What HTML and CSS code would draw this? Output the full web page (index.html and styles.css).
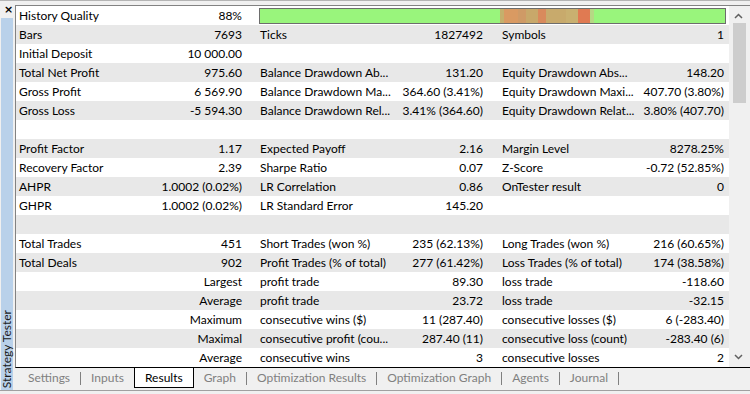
FILE: index.html
```html
<!DOCTYPE html>
<html lang="en">
<head>
    <meta charset="UTF-8">
    <title>Strategy Tester</title>
    <link rel="stylesheet" href="styles.css">
</head>
<body>
    <div class="window">
        <div class="sidebar">
            <div class="close">&times;</div>
            <div class="caption"><span>Strategy Tester</span></div>
        </div>

        <div class="main">
            <div class="panel">
                <div class="report">
                    <div class="row">
                        <div class="cell"><span class="label">History Quality</span><span class="value">88%</span></div>
                        <div class="cell quality-cell"><div class="quality"></div></div>
                    </div>
                    <div class="row">
                        <div class="cell"><span class="label">Bars</span><span class="value">7693</span></div>
                        <div class="cell"><span class="label">Ticks</span><span class="value">1827492</span></div>
                        <div class="cell"><span class="label">Symbols</span><span class="value">1</span></div>
                    </div>
                    <div class="row">
                        <div class="cell"><span class="label">Initial Deposit</span><span class="value">10 000.00</span></div>
                        <div class="cell"></div>
                        <div class="cell"></div>
                    </div>
                    <div class="row">
                        <div class="cell"><span class="label">Total Net Profit</span><span class="value">975.60</span></div>
                        <div class="cell"><span class="label">Balance Drawdown Ab...</span><span class="value">131.20</span></div>
                        <div class="cell"><span class="label">Equity Drawdown Abs...</span><span class="value">148.20</span></div>
                    </div>
                    <div class="row">
                        <div class="cell"><span class="label">Gross Profit</span><span class="value">6 569.90</span></div>
                        <div class="cell"><span class="label">Balance Drawdown Ma...</span><span class="value">364.60 (3.41%)</span></div>
                        <div class="cell"><span class="label">Equity Drawdown Maxi...</span><span class="value">407.70 (3.80%)</span></div>
                    </div>
                    <div class="row">
                        <div class="cell"><span class="label">Gross Loss</span><span class="value">-5 594.30</span></div>
                        <div class="cell"><span class="label">Balance Drawdown Rel...</span><span class="value">3.41% (364.60)</span></div>
                        <div class="cell"><span class="label">Equity Drawdown Relat...</span><span class="value">3.80% (407.70)</span></div>
                    </div>
                    <div class="row"></div>
                    <div class="row">
                        <div class="cell"><span class="label">Profit Factor</span><span class="value">1.17</span></div>
                        <div class="cell"><span class="label">Expected Payoff</span><span class="value">2.16</span></div>
                        <div class="cell"><span class="label">Margin Level</span><span class="value">8278.25%</span></div>
                    </div>
                    <div class="row">
                        <div class="cell"><span class="label">Recovery Factor</span><span class="value">2.39</span></div>
                        <div class="cell"><span class="label">Sharpe Ratio</span><span class="value">0.07</span></div>
                        <div class="cell"><span class="label">Z-Score</span><span class="value">-0.72 (52.85%)</span></div>
                    </div>
                    <div class="row">
                        <div class="cell"><span class="label">AHPR</span><span class="value">1.0002 (0.02%)</span></div>
                        <div class="cell"><span class="label">LR Correlation</span><span class="value">0.86</span></div>
                        <div class="cell"><span class="label">OnTester result</span><span class="value">0</span></div>
                    </div>
                    <div class="row">
                        <div class="cell"><span class="label">GHPR</span><span class="value">1.0002 (0.02%)</span></div>
                        <div class="cell"><span class="label">LR Standard Error</span><span class="value">145.20</span></div>
                        <div class="cell"></div>
                    </div>
                    <div class="row"></div>
                    <div class="row">
                        <div class="cell"><span class="label">Total Trades</span><span class="value">451</span></div>
                        <div class="cell"><span class="label">Short Trades (won %)</span><span class="value">235 (62.13%)</span></div>
                        <div class="cell"><span class="label">Long Trades (won %)</span><span class="value">216 (60.65%)</span></div>
                    </div>
                    <div class="row">
                        <div class="cell"><span class="label">Total Deals</span><span class="value">902</span></div>
                        <div class="cell"><span class="label">Profit Trades (% of total)</span><span class="value">277 (61.42%)</span></div>
                        <div class="cell"><span class="label">Loss Trades (% of total)</span><span class="value">174 (38.58%)</span></div>
                    </div>
                    <div class="row">
                        <div class="cell"><span class="label"></span><span class="value">Largest</span></div>
                        <div class="cell"><span class="label">profit trade</span><span class="value">89.30</span></div>
                        <div class="cell"><span class="label">loss trade</span><span class="value">-118.60</span></div>
                    </div>
                    <div class="row">
                        <div class="cell"><span class="label"></span><span class="value">Average</span></div>
                        <div class="cell"><span class="label">profit trade</span><span class="value">23.72</span></div>
                        <div class="cell"><span class="label">loss trade</span><span class="value">-32.15</span></div>
                    </div>
                    <div class="row">
                        <div class="cell"><span class="label"></span><span class="value">Maximum</span></div>
                        <div class="cell"><span class="label">consecutive wins ($)</span><span class="value">11 (287.40)</span></div>
                        <div class="cell"><span class="label">consecutive losses ($)</span><span class="value">6 (-283.40)</span></div>
                    </div>
                    <div class="row">
                        <div class="cell"><span class="label"></span><span class="value">Maximal</span></div>
                        <div class="cell"><span class="label">consecutive profit (cou...</span><span class="value">287.40 (11)</span></div>
                        <div class="cell"><span class="label">consecutive loss (count)</span><span class="value">-283.40 (6)</span></div>
                    </div>
                    <div class="row">
                        <div class="cell"><span class="label"></span><span class="value">Average</span></div>
                        <div class="cell"><span class="label">consecutive wins</span><span class="value">3</span></div>
                        <div class="cell"><span class="label">consecutive losses</span><span class="value">2</span></div>
                    </div>
                </div>

                <div class="scrollbar">
                    <svg class="arrow" width="9" height="6" viewBox="0 0 9 6"><polyline points="1,5 4.5,1.5 8,5" fill="none" stroke="#606060" stroke-width="1.5"/></svg>
                    <div class="thumb"></div>
                    <div class="track"></div>
                    <svg class="arrow" width="9" height="6" viewBox="0 0 9 6"><polyline points="1,1 4.5,4.5 8,1" fill="none" stroke="#606060" stroke-width="1.5"/></svg>
                </div>
            </div>

            <div class="tabs">
                <span class="tab">Settings</span><span class="sep"></span>
                <span class="tab">Inputs</span>
                <span class="tab active">Results</span>
                <span class="tab">Graph</span><span class="sep"></span>
                <span class="tab">Optimization Results</span><span class="sep"></span>
                <span class="tab">Optimization Graph</span><span class="sep"></span>
                <span class="tab">Agents</span><span class="sep"></span>
                <span class="tab">Journal</span><span class="sep"></span>
            </div>
        </div>
    </div>
</body>
</html>
```

FILE: styles.css
```css
html, body {
    margin: 0;
    padding: 0;
}

body {
    background-color: #f0f0f0;
    color: #000;
    font-family: Lato, "Open Sans", sans-serif;
    font-size: 12px;
}

.window {
    display: flex;
    height: 389px;
    border-top: 1px solid #b4b4b4;
    border-bottom: 1px solid #a0a0a0;
}

/* left vertical caption */
.sidebar {
    width: 15px;
    display: flex;
    flex-direction: column;
}

.close {
    height: 17px;
    padding-left: 4px;
    font-family: "DejaVu Sans", sans-serif;
    font-weight: bold;
    font-size: 11px;
    line-height: 17px;
}

.caption {
    flex: 1;
    margin: 0 2px 0 1px;
    background-color: #b9d1ea;
    display: flex;
    align-items: flex-end;
    justify-content: center;
}

.caption span {
    writing-mode: vertical-rl;
    transform: rotate(180deg);
    color: #1a1a1a;
    line-height: 12px;
    padding-top: 2px;
}

.main {
    flex: 1;
    display: flex;
    flex-direction: column;
}

.panel {
    margin-top: 4px;
    height: 361px;
    display: flex;
    background-color: #fff;
    border-top: 1px solid #828282;
    border-left: 1px solid #828282;
    border-bottom: 1px solid #000;
}

.report {
    width: 713px;
}

.row {
    display: grid;
    grid-template-columns: 241px 242px 230px;
    height: 19px;
    line-height: 19px;
}

.row:nth-child(even) {
    background-color: #e8e8e8;
}

.cell {
    display: flex;
    justify-content: space-between;
    white-space: nowrap;
    padding: 0 15px 0 3px;
}

.cell:nth-child(2) {
    padding-right: 16px;
}

.cell:nth-child(3) {
    padding-right: 5px;
}

.cell.quality-cell {
    grid-column: 2 / 4;
    padding: 2px 3px 2px 2px;
}

.quality {
    flex: 1;
    height: 14px;
    border: 1px solid #6d6d6d;
    background: linear-gradient(to right,
        #99f57c 0, #99f57c 240px,
        #c4b06c 240px, #c4b06c 244px,
        #d99a62 244px, #d99a62 258px,
        #cf9a66 258px, #cf9a66 266px,
        #c8a86a 266px, #c8a86a 278px,
        #d98a5c 278px, #d98a5c 286px,
        #c8aa6c 286px, #c8aa6c 306px,
        #c9b070 306px, #c9b070 318px,
        #e07a52 318px, #e07a52 330px,
        #b6d884 330px, #b6d884 334px,
        #99f57c 334px, #99f57c 100%);
}

.scrollbar {
    flex: 1;
    display: flex;
    flex-direction: column;
    align-items: center;
    background-color: #f0f0f0;
    padding-top: 7px;
}

.arrow {
    margin: 0 2px 0 0;
}

.thumb {
    width: 13px;
    height: 80px;
    margin: 4px 1px 0 0;
    background-color: #cdcdcd;
}

.track {
    flex: 1;
}

.scrollbar .arrow:last-child {
    margin-bottom: 7px;
}

/* bottom tabs */
.tabs {
    display: flex;
    align-items: flex-start;
    padding-left: 3px;
    height: 21px;
}

.tab {
    padding: 0 10px;
    color: #808080;
    line-height: 19px;
}

.tab.active {
    color: #000;
    background-color: #fff;
    border: 1px solid #000;
    border-top: none;
}

.sep {
    width: 1px;
    height: 13px;
    margin-top: 4px;
    background-color: #808080;
}
```
